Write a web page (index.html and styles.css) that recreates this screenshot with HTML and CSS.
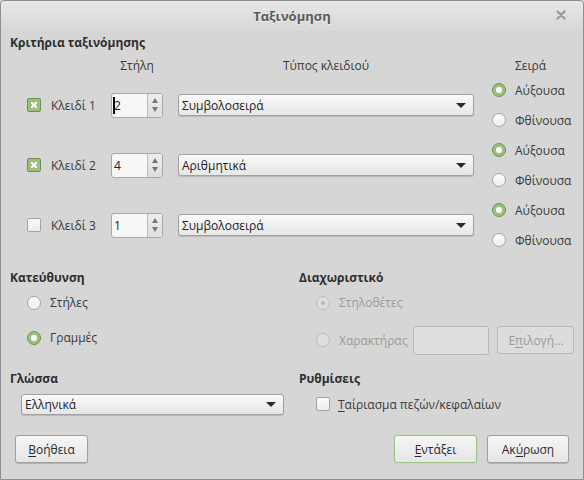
FILE: index.html
```html
<!DOCTYPE html>
<html lang="el">
<head>
<meta charset="utf-8">
<link rel="stylesheet" href="styles.css">
</head>
<body>
<div class="window">
  <div class="titlebar">
    <span class="title">Ταξινόμηση</span>
    <svg class="close" width="10" height="10" viewBox="0 0 10 10"><path d="M1.5 1.5 L8.5 8.5 M8.5 1.5 L1.5 8.5" stroke="#9a9a9a" stroke-width="2.2" stroke-linecap="round"/></svg>
  </div>
  <div class="content">
    <div class="heading">Κριτήρια ταξινόμησης</div>
    <div class="criteria">
      <div class="hdr"></div>
      <div class="hdr center">Στήλη</div>
      <div class="hdr center">Τύπος κλειδιού</div>
      <div class="hdr">Σειρά</div>

      <label class="check"><span class="box on"></span>Κλειδί 1</label>
      <div class="spin"><span class="val"><span class="caret"></span>2</span><span class="btns"><i class="up"></i><i class="down"></i></span></div>
      <div class="combo"><span>Συμβολοσειρά</span><i class="arrow"></i></div>
      <div class="order"><div class="radio"><span class="dot on"></span>Αύξουσα</div><div class="radio"><span class="dot"></span>Φθίνουσα</div></div>

      <label class="check"><span class="box on"></span>Κλειδί 2</label>
      <div class="spin"><span class="val">4</span><span class="btns"><i class="up"></i><i class="down"></i></span></div>
      <div class="combo"><span>Αριθμητικά</span><i class="arrow"></i></div>
      <div class="order"><div class="radio"><span class="dot on"></span>Αύξουσα</div><div class="radio"><span class="dot"></span>Φθίνουσα</div></div>

      <label class="check"><span class="box"></span>Κλειδί 3</label>
      <div class="spin"><span class="val">1</span><span class="btns"><i class="up"></i><i class="down"></i></span></div>
      <div class="combo"><span>Συμβολοσειρά</span><i class="arrow"></i></div>
      <div class="order"><div class="radio"><span class="dot on"></span>Αύξουσα</div><div class="radio"><span class="dot"></span>Φθίνουσα</div></div>
    </div>

    <div class="sections">
      <div class="section">
        <div class="heading">Κατεύθυνση</div>
        <div class="opts">
          <div class="radio r1"><span class="dot"></span>Στήλες</div>
          <div class="radio r2"><span class="dot on"></span>Γραμμές</div>
        </div>
      </div>
      <div class="section">
        <div class="heading">Διαχωριστικό</div>
        <div class="opts">
          <div class="radio r1 disabled"><span class="dot dis-on"></span>Στηλοθέτες</div>
          <div class="radio r2b disabled"><span class="dot"></span>Χαρακτήρας<span class="textbox"></span><span class="btn small">Ε<u>π</u>ιλογή...</span></div>
        </div>
      </div>
      <div class="section">
        <div class="heading">Γλώσσα</div>
        <div class="combo lang"><span>Ελληνικά</span><i class="arrow"></i></div>
      </div>
      <div class="section">
        <div class="heading">Ρυθμίσεις</div>
        <label class="check match"><span class="box"></span><span><u>Τ</u>αίριασμα πεζών/κεφαλαίων</span></label>
      </div>
    </div>

    <div class="buttons">
      <span class="btn help"><u>Β</u>οήθεια</span>
      <span class="spacer"></span>
      <span class="btn default"><u>Ε</u>ντάξει</span>
      <span class="btn cancel">Ακ<u>ύ</u>ρωση</span>
    </div>
  </div>
</div>
</body>
</html>
```

FILE: styles.css
```css
* { box-sizing: border-box; }
html, body { margin: 0; padding: 0; }
body {
  width: 584px;
  height: 480px;
  font-family: "Open Sans", "Noto Sans", sans-serif;
  font-size: 12px;
  color: #3a3a3a;
  background: #d6d6d6;
}
.window {
  width: 584px;
  height: 480px;
  border: 1px solid #8e8e8e;
  border-radius: 4px 4px 0 0;
  background: #d6d6d6;
  display: flex;
  flex-direction: column;
}
.titlebar {
  height: 29px;
  position: relative;
  display: flex;
  align-items: center;
  justify-content: center;
  background: linear-gradient(#e6e6e6, #d8d8d8);
  border-radius: 4px 4px 0 0;
}
.title {
  font-weight: bold;
  font-size: 13px;
  color: #5c5c5c;
  text-shadow: 0 1px 0 #f0f0f0;
}
.close {
  position: absolute;
  right: 17px;
  top: 9px;
}
.content {
  padding: 4px 0 0 9px;
  flex: 1;
  display: flex;
  flex-direction: column;
}
.heading {
  font-weight: bold;
  font-size: 12px;
  color: #2e2e2e;
  height: 18px;
  line-height: 18px;
}
.criteria {
  display: grid;
  grid-template-columns: 84px 52px 311px 92px;
  column-gap: 0;
  grid-template-rows: 18px 60px 60px 60px;
  margin-left: 17px;
  margin-top: 5px;
}
.criteria > .hdr { line-height: 18px; height: 18px; }
.criteria > .hdr:nth-child(3) { margin-left: 15px; }
.criteria > .hdr:nth-child(4) { margin-left: 18px; padding-left: 23px; }
.center { text-align: center; }
.check {
  display: flex;
  align-items: center;
  gap: 10px;
}
.box {
  width: 14px;
  height: 14px;
  border: 1px solid #a3a3a3;
  border-radius: 2px;
  background: linear-gradient(#fbfbfb, #ececec);
  display: inline-block;
  position: relative;
  flex: none;
}
.box.on {
  background: #9cc27a;
  border-color: #6d8f55;
}
.box.on::before {
  content: "";
  position: absolute;
  left: 3px; top: 3px; width: 6px; height: 6px;
  background:
    linear-gradient(45deg, transparent 35%, #fff 35%, #fff 65%, transparent 65%),
    linear-gradient(-45deg, transparent 35%, #fff 35%, #fff 65%, transparent 65%);
}
.spin {
  align-self: center;
  height: 25px;
  display: flex;
  border: 1px solid #a8a8a8;
  border-radius: 3px;
  background: #f7f7f7;
}
.spin .val {
  flex: 1;
  line-height: 23px;
  padding-left: 2px;
  color: #222;
  position: relative;
}
.caret {
  position: absolute;
  left: 1px;
  top: 3px;
  width: 1.5px;
  height: 17px;
  background: #000;
}
.spin .btns {
  width: 15px;
  border-left: 1px solid #bdbdbd;
  display: flex;
  flex-direction: column;
  align-items: center;
  justify-content: center;
  gap: 4px;
  background: linear-gradient(#ededed, #dedede);
  border-radius: 0 2px 2px 0;
}
.up, .down { width: 0; height: 0; border-left: 3px solid transparent; border-right: 3px solid transparent; }
.up { border-bottom: 5px solid #777; }
.down { border-top: 5px solid #777; }
.combo {
  align-self: center;
  height: 22px;
  margin-left: 15px;
  display: flex;
  align-items: center;
  justify-content: space-between;
  padding: 0 7px 0 3px;
  border: 1px solid #a2a2a2;
  border-radius: 3px;
  background: linear-gradient(#fafafa, #e6e6e6);
  box-shadow: 0 1px 1px rgba(0,0,0,0.15);
  color: #222;
}
.arrow {
  width: 0; height: 0;
  border-left: 5px solid transparent;
  border-right: 5px solid transparent;
  border-top: 5px solid #2a2a2a;
}
.order {
  margin-left: 18px;
  display: flex;
  flex-direction: column;
}
.radio {
  display: flex;
  align-items: center;
  gap: 9px;
  height: 30px;
}
.dot {
  width: 14px;
  height: 14px;
  border-radius: 50%;
  border: 1px solid #a5a5a5;
  background: linear-gradient(#fdfdfd, #ededed);
  display: inline-block;
  flex: none;
  position: relative;
}
.dot.on {
  border-color: #6f9156;
  background: #9cc27a;
}
.dot.on::before, .dot.dis-on::before {
  content: "";
  position: absolute;
  left: 3px; top: 3px; width: 6px; height: 6px;
  border-radius: 50%;
  background: #fff;
}
.dot.dis-on { background: #e3e3e3; border-color: #bcbcbc; }
.dot.dis-on::before { background: #b8b8b8; left: 4px; top: 4px; width: 4px; height: 4px; }
.disabled { color: #9c9c9c; }
.disabled .dot { border-color: #bdbdbd; background: #dedede; }
.sections {
  display: grid;
  grid-template-columns: 289px 1fr;
  grid-template-rows: 101px 60px;
  margin-top: 14px;
}
.opts { padding-left: 17px; margin-top: -2px; }
.r1 { height: 35px; }
.r2 { height: 35px; }
.r2b { height: 40px; }
.textbox {
  width: 76px;
  height: 29px;
  margin-left: -3px;
  border: 1px solid #b9b9b9;
  border-radius: 3px;
  background: #dedede;
  display: inline-block;
}
.btn {
  display: inline-flex;
  align-items: center;
  justify-content: center;
  height: 28px;
  border: 1px solid #a0a0a0;
  border-radius: 3px;
  background: linear-gradient(#f6f6f6, #e5e5e5);
  box-shadow: 0 1px 1px rgba(0,0,0,0.18);
  color: #2a2a2a;
}
.btn.small {
  width: 77px;
  margin-left: -1px;
  color: #9a9a9a;
  background: #dcdcdc;
  border-color: #bababa;
  box-shadow: none;
}
u { text-decoration-thickness: 1px; text-underline-offset: 2px; }
.lang {
  width: 263px;
  margin-left: 11px;
  margin-top: 6px;
  height: 21px;
  align-self: auto;
}
.match {
  padding-left: 17px;
  margin-top: 6px;
  height: 20px;
  gap: 8px;
}
.buttons {
  display: flex;
  padding-left: 5px;
  padding-right: 14px;
  margin-top: 5px;
  gap: 10px;
}
.spacer { flex: 1; }
.help { width: 73px; }
.default { width: 83px; border-color: #9fc48a; box-shadow: 0 0 0 1px #c5dcb5, 0 1px 1px rgba(0,0,0,0.18); }
.cancel { width: 82px; }
```
